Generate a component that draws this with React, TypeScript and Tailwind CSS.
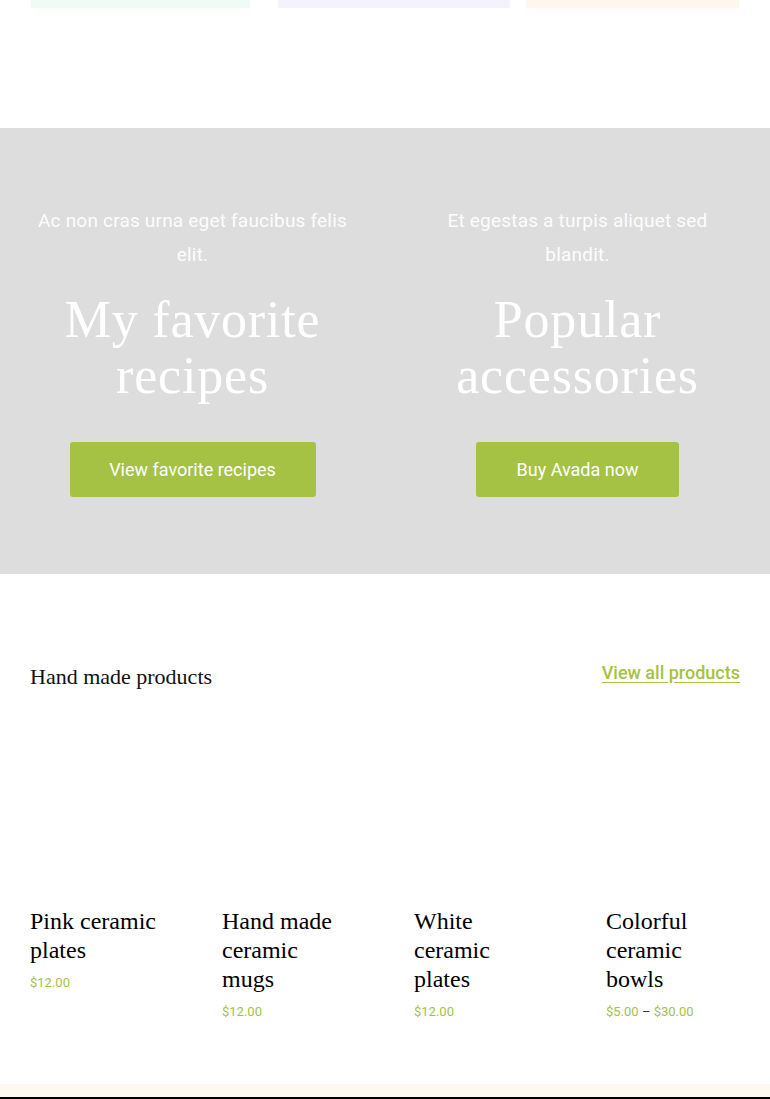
const serif = "font-['Liberation_Serif',serif]"
const sans = "font-['Roboto',sans-serif]"

const products = [
  { title: 'Pink ceramic plates', price: ['$12.00'] },
  { title: 'Hand made ceramic mugs', price: ['$12.00'] },
  { title: 'White ceramic plates', price: ['$12.00'] },
  { title: 'Colorful ceramic bowls', price: ['$5.00', '$30.00'] },
]

function Promo({ lead, title, cta, btnWidth }: { lead: string; title: string; cta: string; btnWidth: string }) {
  return (
    <div className="flex flex-col items-center text-center">
      <p className={`${sans} px-[8px] text-[19px] leading-[34px] tracking-[0.2px] text-white/95`}>{lead}</p>
      <h2 className={`${serif} mt-[20px] text-[52px] leading-[56px] tracking-[0.8px] text-white`}>{title}</h2>
      <a
        href="#"
        className={`${sans} mt-[38px] flex h-[55px] items-center justify-center rounded-[3px] bg-[#a5c244] text-[18px] text-white ${btnWidth}`}
      >
        {cta}
      </a>
    </div>
  )
}

export default function App() {
  return (
    <div className="w-[770px] bg-white">
      {/* bottoms of the cards above */}
      <div className="flex h-[128px] items-start px-[31px]">
        <div className="h-[8px] w-[219px] bg-[#effbf4] shadow-[0_6px_10px_rgba(0,0,0,0.015)]" />
        <div className="ml-[28px] h-[8px] w-[233px] bg-[#f4f3fd]" />
        <div className="ml-[16px] h-[8px] w-[213px] bg-[#fff6ee] shadow-[0_6px_10px_rgba(0,0,0,0.015)]" />
      </div>

      {/* promo */}
      <section className="bg-[#dddddd] px-[30px] pt-[76px] pb-[77px]">
        <div className="grid grid-cols-2 gap-[60px]">
          <Promo
            lead="Ac non cras urna eget faucibus felis elit."
            title="My favorite recipes"
            cta="View favorite recipes"
            btnWidth="w-[246px]"
          />
          <Promo
            lead="Et egestas a turpis aliquet sed blandit."
            title="Popular accessories"
            cta="Buy Avada now"
            btnWidth="w-[203px]"
          />
        </div>
      </section>

      {/* products */}
      <section className="px-[30px] pt-[88px] pb-[63px]">
        <div className="flex items-start justify-between">
          <h3 className={`${serif} text-[22px] leading-[30px] text-[#111]`}>Hand made products</h3>
          <a href="#" className={`${sans} text-[18px] leading-[22px] font-medium text-[#a5c244] underline underline-offset-[3px]`}>
            View all products
          </a>
        </div>

        <div className="mt-[30px] grid grid-cols-[repeat(4,134px)] gap-[58px]">
          {products.map((p) => (
            <div key={p.title} className="flex flex-col">
              <div className="h-[162px] bg-white" />
              <h4 className={`${serif} mt-[23px] pr-[5px] text-[24px] leading-[29px] text-black`}>{p.title}</h4>
              <div className={`${sans} mt-[9px] text-[13px] leading-[18px] text-[#a5c244]`}>
                {p.price.length === 2 ? (
                  <>
                    {p.price[0]} <span className="text-[#333]">–</span> {p.price[1]}
                  </>
                ) : (
                  p.price[0]
                )}
              </div>
            </div>
          ))}
        </div>
      </section>

      {/* footer top */}
      <div className="h-[13px] bg-[#fdf8f2]" />
      <div className="h-[2px] bg-black" />
    </div>
  )
}
